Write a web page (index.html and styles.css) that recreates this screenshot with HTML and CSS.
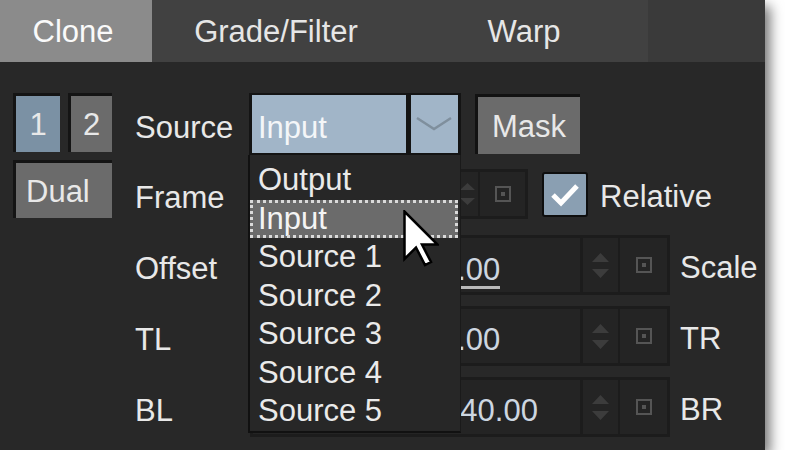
FILE: index.html
```html
<!DOCTYPE html>
<html lang="en">
  <head>
    <meta charset="UTF-8" />
    <meta name="viewport" content="width=device-width, initial-scale=1.0" />
    <title>Clone</title>
    <link rel="stylesheet" href="styles.css">
  </head>
  <body>
    <div class="panel">
      <div class="tabs">
        <div class="tab active">Clone</div>
        <div class="tab">Grade/Filter</div>
        <div class="tab">Warp</div>
      </div>

      <div class="content">
        <div class="modes">
          <div class="mode on">1</div>
          <div class="mode">2</div>
          <div class="mode dual">Dual</div>
        </div>

        <div class="form">
          <div class="row first">
            <span class="label">Source</span>
            <div class="combo">
              <div class="combo-text">Input</div>
              <div class="combo-arrow">
                <svg width="47" height="58" viewBox="0 0 47 58"><polyline points="6,23 23,34 40,23" fill="none" stroke="#7f8f9d" stroke-width="2.5" /></svg>
              </div>
            </div>
            <div class="btn">Mask</div>
          </div>

          <div class="row">
            <span class="label">Frame</span>
            <div class="spin small">
              <div class="field"></div>
              <div class="arrows">
                <svg width="21" height="44" viewBox="0 0 21 44"><path d="M3 18 L10.5 11 L18 18 Z M3 26 L10.5 33 L18 26 Z" fill="#3c3c3c" /></svg>
              </div>
              <div class="reset">
                <svg width="16" height="16" viewBox="0 0 16 16"><rect x="1" y="1" width="14" height="14" fill="none" stroke="#555" stroke-width="2" /><rect x="6" y="6" width="4" height="4" fill="#555" /></svg>
              </div>
            </div>
            <div class="check">
              <svg width="42" height="41" viewBox="0 0 42 41"><polyline points="9,21 17,29 33,12" fill="none" stroke="#fff" stroke-width="5" /></svg>
            </div>
            <span class="side">Relative</span>
          </div>

          <div class="row">
            <span class="label">Offset</span>
            <div class="spin">
              <div class="field"><span class="val edit">0.00</span></div>
              <div class="arrows">
                <svg width="35" height="54" viewBox="0 0 35 54"><path d="M9 24 L17.5 15 L26 24 Z M9 31 L17.5 40 L26 31 Z" fill="#3c3c3c" /></svg>
              </div>
              <div class="reset">
                <svg width="16" height="16" viewBox="0 0 16 16"><rect x="1" y="1" width="14" height="14" fill="none" stroke="#555" stroke-width="2" /><rect x="6" y="6" width="4" height="4" fill="#555" /></svg>
              </div>
            </div>
            <span class="side">Scale</span>
          </div>

          <div class="row">
            <span class="label">TL</span>
            <div class="spin">
              <div class="field"><span class="val">0.00</span></div>
              <div class="arrows">
                <svg width="35" height="54" viewBox="0 0 35 54"><path d="M9 24 L17.5 15 L26 24 Z M9 31 L17.5 40 L26 31 Z" fill="#3c3c3c" /></svg>
              </div>
              <div class="reset">
                <svg width="16" height="16" viewBox="0 0 16 16"><rect x="1" y="1" width="14" height="14" fill="none" stroke="#555" stroke-width="2" /><rect x="6" y="6" width="4" height="4" fill="#555" /></svg>
              </div>
            </div>
            <span class="side">TR</span>
          </div>

          <div class="row">
            <span class="label">BL</span>
            <div class="spin">
              <div class="field"><span class="val neg">-40.00</span></div>
              <div class="arrows">
                <svg width="35" height="54" viewBox="0 0 35 54"><path d="M9 24 L17.5 15 L26 24 Z M9 31 L17.5 40 L26 31 Z" fill="#3c3c3c" /></svg>
              </div>
              <div class="reset">
                <svg width="16" height="16" viewBox="0 0 16 16"><rect x="1" y="1" width="14" height="14" fill="none" stroke="#555" stroke-width="2" /><rect x="6" y="6" width="4" height="4" fill="#555" /></svg>
              </div>
            </div>
            <span class="side">BR</span>
          </div>
        </div>
      </div>

      <ul class="dropdown">
        <li>Output</li>
        <li class="selected">Input</li>
        <li>Source 1</li>
        <li>Source 2</li>
        <li>Source 3</li>
        <li>Source 4</li>
        <li>Source 5</li>
      </ul>

      <svg class="cursor" width="36" height="58" viewBox="0 0 36 58">
        <path d="M1.5 1.5 L1.5 49 L13 37.5 L22 55 L28 52 L19 34.5 L34.5 34.5 Z" fill="#fff" stroke="#000" stroke-width="2.5" stroke-linejoin="miter" />
      </svg>
    </div>
  </body>
</html>
```

FILE: styles.css
```css
body {
  margin: 0;
  background: #fff;
  font-family: "Liberation Sans", Arial, sans-serif;
  font-size: 31px;
  color: #e8e8e8;
}
.panel {
  position: relative;
  width: 765px;
  height: 450px;
  background: #282828;
  box-shadow: 5px 6px 12px rgba(0, 0, 0, 0.55);
}
.tabs {
  display: flex;
  height: 62px;
  background: #3a3a3a;
}
.tab {
  width: 248px;
  display: flex;
  align-items: center;
  justify-content: center;
  padding-top: 2px;
  box-sizing: border-box;
  background: #414141;
  color: #e6e6e6;
}
.tab.active {
  width: 152px;
  background: #8b8b8b;
  color: #fafafa;
  padding-right: 6px;
}
.content {
  display: flex;
  padding: 31px 0 0 13px;
}
.modes {
  display: grid;
  grid-template-columns: 47px 44px;
  grid-template-rows: 59px 58px;
  gap: 8px;
  align-self: flex-start;
}
.mode {
  display: flex;
  align-items: center;
  justify-content: center;
  padding-top: 2px;
  background: #6b6b6b;
  border-top: 3px solid #141414;
  border-left: 3px solid #141414;
  box-sizing: border-box;
}
.mode.on {
  background: #7b91a4;
}
.mode.dual {
  grid-column: span 2;
  justify-content: flex-start;
  padding-left: 10px;
}
.form {
  margin-left: 23px;
  display: flex;
  flex-direction: column;
  gap: 11px;
}
.row {
  display: flex;
  align-items: center;
  height: 60px;
}
.row.first {
  height: 62px;
  margin-bottom: -2px;
}
.label {
  width: 115px;
  padding-top: 7px;
}
.side {
  padding-top: 5px;
}
.combo {
  display: flex;
  gap: 5px;
  width: 212px;
  height: 62px;
  box-sizing: border-box;
  padding: 2px 3px 2px 3px;
  margin-left: -1px;
  background: #141414;
}
.combo-text {
  flex: 1;
  background: #a1b5c8;
  color: #f4f6f8;
  padding: 7px 0 0 6px;
  display: flex;
  align-items: center;
}
.combo-arrow {
  width: 47px;
  background: #a1b5c8;
  display: flex;
  align-items: center;
}
.btn {
  margin-left: 14px;
  width: 105px;
  height: 60px;
  box-sizing: border-box;
  display: flex;
  align-items: center;
  justify-content: center;
  background: #6b6b6b;
  border-top: 3px solid #121212;
  border-left: 3px solid #121212;
  padding-top: 2px;
}
.spin {
  display: flex;
  gap: 3px;
  height: 60px;
  box-sizing: border-box;
  padding: 3px;
  background: #1c1c1c;
}
.spin .field {
  width: 327px;
  background: #242424;
  display: flex;
  align-items: center;
  padding-left: 187px;
  box-sizing: border-box;
}
.spin .arrows {
  width: 35px;
  background: #242424;
  display: flex;
  align-items: center;
}
.spin .reset {
  width: 47px;
  margin-left: -1px;
  background: #242424;
  display: flex;
  align-items: center;
  justify-content: center;
}
.spin + .side {
  margin-left: 10px;
}
.spin.small {
  height: 50px;
}
.spin.small .field {
  width: 201px;
}
.spin.small .arrows {
  width: 21px;
}
.spin.small .reset {
  width: 45px;
}
.val {
  color: #cdd6e0;
  padding-top: 7px;
}
.val.neg {
  margin-left: 10px;
}
.val.edit {
  padding-top: 12px;
  border-bottom: 3px solid #b9b9b9;
  line-height: 33px;
}
.check {
  margin-left: 14px;
  width: 46px;
  height: 45px;
  box-sizing: border-box;
  border: 2px solid #0e0e0e;
  border-radius: 3px;
  background: #8a9fb2;
}
.check + .side {
  margin-left: 12px;
}
.dropdown {
  position: absolute;
  left: 248px;
  top: 155px;
  width: 213px;
  height: 278px;
  box-sizing: border-box;
  margin: 0;
  padding: 6px 0 0 0;
  list-style: none;
  background: #272727;
  border-left: 2px solid #111;
  border-bottom: 2px solid #111;
  border-right: 1px solid #1a1a1a;
}
.dropdown li {
  height: 38.5px;
  line-height: 38.5px;
  padding-left: 8px;
  color: #eaeaea;
}
.dropdown li.selected {
  background: #6b6b6b;
  outline: 3px dotted #dadada;
  outline-offset: -3px;
  margin-right: 2px;
  color: #f4f4f4;
}
.cursor {
  position: absolute;
  left: 403px;
  top: 210px;
}
```
